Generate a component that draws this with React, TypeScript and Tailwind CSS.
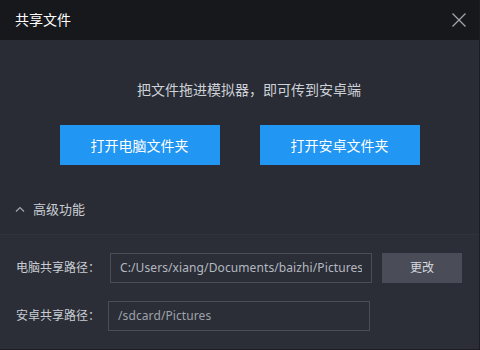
import React from 'react';

const font = { fontFamily: '"Noto Sans", "Noto Sans CJK SC", sans-serif' };

function PathRow({ label, value, labelW, dim, action }: { label: string; value: string; labelW: string; dim?: boolean; action?: boolean }) {
  return (
    <div className="flex items-center pl-4">
      <span className={`${labelW} text-[12px] text-[#c9cdd3] leading-5`}>{label}</span>
      <div className="w-[262px] h-[30px] border border-[#4a4d56] flex items-center px-[9px]">
        <span className={`text-[12px] tracking-[0.1px] whitespace-nowrap overflow-hidden ${dim ? 'text-[#9ea2aa]' : 'text-[#b4b8c0]'}`}>{value}</span>
      </div>
      {action && (
        <button className="ml-[10px] w-20 h-[30px] bg-[#4a4d58] text-[12px] text-[#d4d7dc]">更改</button>
      )}
    </div>
  );
}

export default function App() {
  return (
    <div className="w-[480px] h-[350px] bg-[#292c34] flex flex-col overflow-hidden border-r border-b border-[#1c1d22]" style={font}>
      <div className="h-10 shrink-0 bg-[#17181c] flex items-center justify-between pl-[15px] pr-[12px]">
        <span className="text-[14px] text-white leading-5">共享文件</span>
        <svg width="16" height="16" viewBox="0 0 16 16" className="text-[#a3a5ab]">
          <path d="M1.5 1.5L14.5 14.5M14.5 1.5L1.5 14.5" stroke="currentColor" strokeWidth="1.3" />
        </svg>
      </div>

      <div className="pt-10 flex flex-col items-center">
        <p className="pl-[19px] text-[14px] text-[#cdd1d8] leading-5">把文件拖进模拟器，即可传到安卓端</p>
        <div className="mt-[25px] flex gap-10">
          <button className="w-40 h-10 bg-[#2196f3] text-white text-[14px]">打开电脑文件夹</button>
          <button className="w-40 h-10 bg-[#2196f3] text-white text-[14px]">打开安卓文件夹</button>
        </div>
      </div>

      <div className="mt-[34px] pl-[15px] flex items-center gap-[8px]">
        <svg width="10" height="6" viewBox="0 0 10 6" className="text-[#a3a6ad]">
          <path d="M1 5.5L5 1.5L9 5.5" fill="none" stroke="currentColor" strokeWidth="1.2" />
        </svg>
        <span className="text-[13px] text-[#c9cdd3] leading-5">高级功能</span>
      </div>

      <div className="mt-[15px] flex-1 border-t border-[#30333b] bg-[#2b2e36] pt-[18px] flex flex-col gap-[18px]">
        <PathRow label="电脑共享路径：" value="C:/Users/xiang/Documents/baizhi/Pictures" labelW="w-[94px]" action />
        <PathRow label="安卓共享路径：" value="/sdcard/Pictures" labelW="w-[92px]" dim />
      </div>
    </div>
  );
}
